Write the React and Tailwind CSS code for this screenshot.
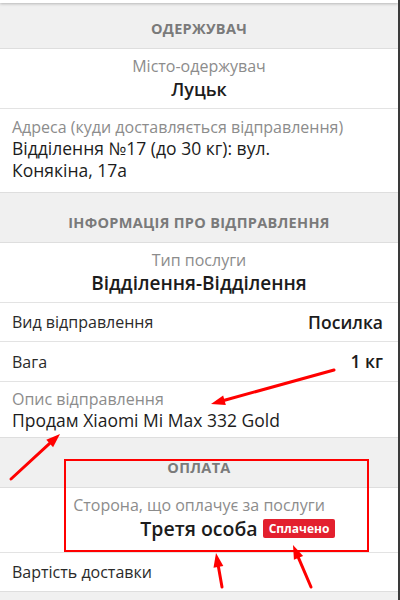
import React from 'react';

const font = { fontFamily: "'Open Sans', 'Noto Sans', sans-serif" };

function Header({ children, h }) {
  return (
    <div className={`${h} bg-[#f0f0f0] border-b border-[#dedede] flex items-end justify-center pb-[9px]`}>
      <span className="text-[14.5px] leading-[20px] font-bold uppercase text-[#7a7a7a] tracking-[0.3px]">{children}</span>
    </div>
  );
}

function Centered({ label, value, cls = '', valueCls = 'text-[18px]' }) {
  return (
    <div className={`bg-white border-b border-[#e3e3e3] flex flex-col items-center ${cls}`}>
      <span className="text-[16px] leading-[22px] text-[#8c8c8c]">{label}</span>
      <span className={`${valueCls} leading-[25px] font-semibold text-[#1c1c1c]`}>{value}</span>
    </div>
  );
}

function Row({ label, value, h = 'h-[39px]' }) {
  return (
    <div className={`${h} bg-white border-b border-[#e3e3e3] flex items-center justify-between pl-[12px] pr-[15px]`}>
      <span className="text-[16px] text-[#2a2a2a]">{label}</span>
      <span className="text-[17.5px] font-semibold text-[#1c1c1c]">{value}</span>
    </div>
  );
}

// червоні стрілки поверх скріншота
function Arrow({ x1, y1, x2, y2 }) {
  const a = Math.atan2(y2 - y1, x2 - x1);
  const L = 14, W = 5;
  const bx = x2 - L * Math.cos(a), by = y2 - L * Math.sin(a);
  const p1 = `${bx + W * Math.sin(a)},${by - W * Math.cos(a)}`;
  const p2 = `${bx - W * Math.sin(a)},${by + W * Math.cos(a)}`;
  return (
    <g>
      <line x1={x1} y1={y1} x2={bx} y2={by} stroke="#ff0000" strokeWidth="3" strokeLinecap="round" />
      <polygon points={`${x2},${y2} ${p1} ${p2}`} fill="#ff0000" />
    </g>
  );
}

export default function App() {
  return (
    <div className="relative w-[400px] h-[600px] overflow-hidden bg-[#f0f0f0] border-r-2 border-[#3a3a3a]" style={font}>
      <div className="h-[3px] bg-white shadow-[0_1px_3px_rgba(0,0,0,0.25)] relative z-10" />
      <Header h="h-[46px]">Одержувач</Header>

      <Centered label="Місто-одержувач" value="Луцьк" cls="h-[60px] pt-[6px]" />

      <div className="h-[84px] bg-white border-b border-[#dedede] pl-[12px] pt-[8px]">
        <div className="text-[16px] leading-[20px] text-[#8c8c8c]">Адреса (куди доставляється відправлення)</div>
        <div className="text-[17.5px] leading-[22px] text-[#1c1c1c]">Відділення №17 (до 30 кг): вул.</div>
        <div className="text-[17.5px] leading-[22px] text-[#1c1c1c]">Конякіна, 17а</div>
      </div>

      <Header h="h-[50px]">Інформація про відправлення</Header>

      <Centered label="Тип послуги" value="Відділення-Відділення" cls="h-[60px] pt-[6px]" valueCls="text-[19px]" />
      <Row label="Вид відправлення" value="Посилка" />
      <Row label="Вага" value="1 кг" h="h-[40px]" />

      <div className="h-[56px] bg-white border-b border-[#dedede] pl-[12px] pt-[7px]">
        <div className="text-[16px] leading-[20px] text-[#8c8c8c]">Опис відправлення</div>
        <div className="text-[17.5px] leading-[22px] text-[#1c1c1c]">Продам Xiaomi Mi Max 332 Gold</div>
      </div>

      <Header h="h-[50px]">Оплата</Header>

      <div className="h-[65px] bg-white border-b border-[#e3e3e3] flex flex-col items-center pt-[6px]">
        <span className="text-[16px] leading-[22px] text-[#8c8c8c]">Сторона, що оплачує за послуги</span>
        <span className="relative text-[19.5px] leading-[26px] font-semibold text-[#1c1c1c]">
          Третя особа
          <span className="absolute left-full top-[3px] ml-[5px] h-[19px] px-[6px] rounded-[2px] bg-[#e3202e] text-white text-[12px] font-bold leading-[19px] whitespace-nowrap">Сплачено</span>
        </span>
      </div>

      <div className="h-[39px] bg-white border-b border-[#dedede] flex items-center pl-[12px]">
        <span className="text-[16px] text-[#2a2a2a]">Вартість доставки</span>
      </div>

      <div className="absolute left-[64px] top-[459px] w-[305px] h-[93px] border-2 border-[#ff0000] pointer-events-none" />
      <svg className="absolute inset-0 pointer-events-none" width="400" height="600">
        <Arrow x1={334} y1={370} x2={211} y2={404} />
        <Arrow x1={11} y1={479} x2={60} y2={434} />
        <Arrow x1={222} y1={587} x2={216} y2={553} />
        <Arrow x1={311} y1={587} x2={293} y2={545} />
      </svg>
    </div>
  );
}
